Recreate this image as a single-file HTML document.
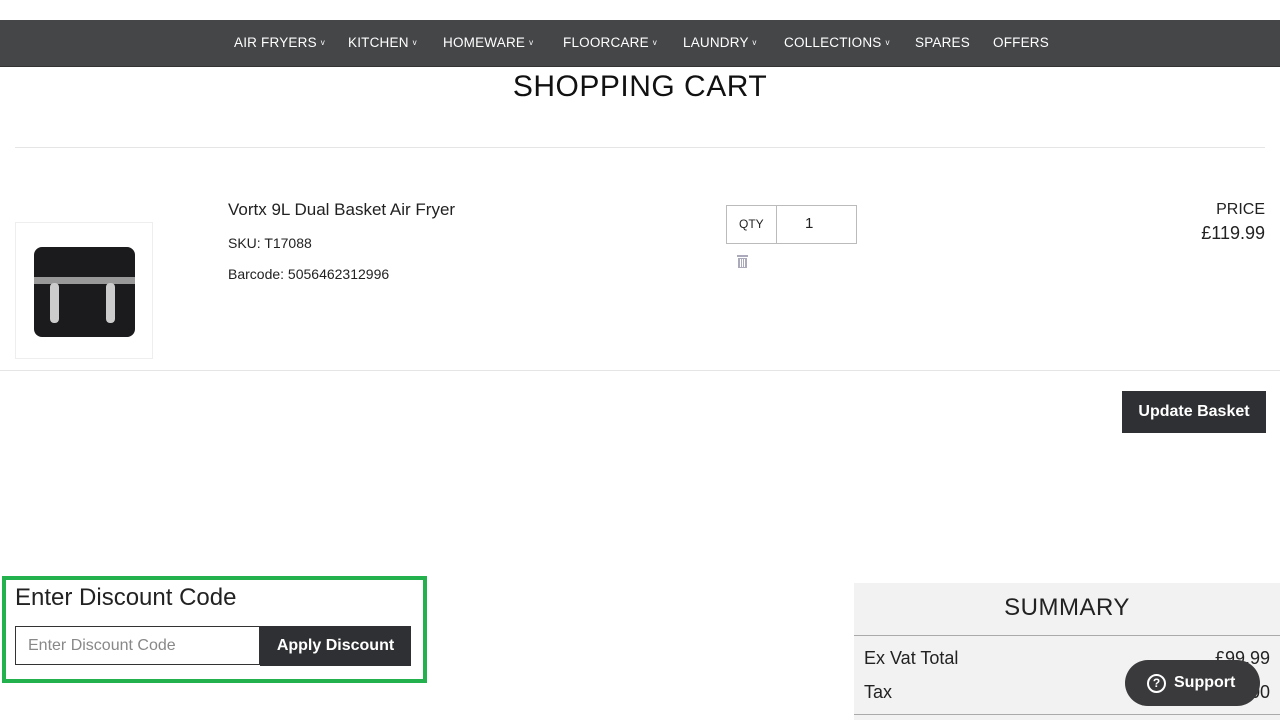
<!DOCTYPE html>
<html><head><style>
*{box-sizing:border-box;margin:0;padding:0}
body{width:1280px;height:720px;overflow:hidden;background:#fff;font-family:"Liberation Sans",sans-serif;color:#222;position:relative}
.abs{position:absolute}
nav{position:absolute;left:0;top:20px;width:1280px;height:47px;background:#454648;border-bottom:1px solid #333}
nav span{position:absolute;top:15px;color:#fff;font-size:13.5px;letter-spacing:0.2px}
nav i{font-style:normal;font-size:8px;vertical-align:2px}
</style></head><body>
<nav>
<span style="left:234px">AIR FRYERS <i>v</i></span>
<span style="left:348px">KITCHEN <i>v</i></span>
<span style="left:443px">HOMEWARE <i>v</i></span>
<span style="left:563px">FLOORCARE <i>v</i></span>
<span style="left:683px">LAUNDRY <i>v</i></span>
<span style="left:784px">COLLECTIONS <i>v</i></span>
<span style="left:915px">SPARES</span>
<span style="left:993px">OFFERS</span>
</nav>
<div class="abs" style="left:0;width:1280px;top:70px;text-align:center;font-size:30px;color:#111;letter-spacing:0.5px">SHOPPING CART</div>
<div class="abs" style="left:15px;top:147px;width:1250px;height:1px;background:#e5e5e5"></div>
<div class="abs" style="left:15px;top:222px;width:138px;height:137px;border:1px solid #eee">
<div class="abs" style="left:18px;top:24px;width:101px;height:90px;background:#1b1b1d;border-radius:8px"></div>
<div class="abs" style="left:18px;top:54px;width:101px;height:7px;background:#999"></div>
<div class="abs" style="left:34px;top:60px;width:9px;height:40px;background:#ccc;border-radius:4px"></div>
<div class="abs" style="left:90px;top:60px;width:9px;height:40px;background:#ccc;border-radius:4px"></div>
</div>
<div class="abs" style="left:228px;top:200px;font-size:17px">Vortx 9L Dual Basket Air Fryer</div>
<div class="abs" style="left:228px;top:235px;font-size:14px">SKU: T17088</div>
<div class="abs" style="left:228px;top:266px;font-size:14px">Barcode: 5056462312996</div>
<div class="abs" style="left:726px;top:205px;width:131px;height:39px;border:1px solid #bbb"></div>
<div class="abs" style="left:776px;top:205px;width:1px;height:39px;background:#bbb"></div>
<div class="abs" style="left:739px;top:217px;font-size:12px">QTY</div>
<div class="abs" style="left:805px;top:215px;font-size:15px">1</div>
<svg class="abs" style="left:736px;top:254px" width="13" height="14" viewBox="0 0 13 14"><rect x="1" y="1" width="11" height="2" fill="#aab"/><rect x="2" y="4" width="9" height="10" fill="#aab"/><rect x="4" y="5" width="1" height="8" fill="#fff"/><rect x="6" y="5" width="1" height="8" fill="#fff"/><rect x="8" y="5" width="1" height="8" fill="#fff"/></svg>
<div class="abs" style="right:15px;top:201px;font-size:16px;text-align:right">PRICE</div>
<div class="abs" style="right:15px;top:223px;font-size:18px">£119.99</div>
<div class="abs" style="left:0;top:370px;width:1280px;height:1px;background:#e5e5e5"></div>
<div class="abs" style="left:1122px;top:391px;width:144px;height:42px;background:#2f3033;color:#fff;font-weight:bold;font-size:16px;text-align:center;line-height:42px">Update Basket</div>
<div class="abs" style="left:2px;top:576px;width:425px;height:107px;border:4px solid #22b14c"></div>
<div class="abs" style="left:15px;top:584px;font-size:24px">Enter Discount Code</div>
<div class="abs" style="left:15px;top:626px;width:245px;height:39px;border:1px solid #333;padding-left:12px;line-height:37px;font-size:16px;color:#888">Enter Discount Code</div>
<div class="abs" style="left:260px;top:626px;width:151px;height:40px;background:#2f3033;color:#fff;font-weight:bold;font-size:16px;text-align:center;line-height:40px">Apply Discount</div>
<div class="abs" style="left:854px;top:583px;width:426px;height:137px;background:#f2f2f2"></div>
<div class="abs" style="left:854px;top:594px;width:426px;text-align:center;font-size:24px;letter-spacing:0.5px">SUMMARY</div>
<div class="abs" style="left:854px;top:635px;width:426px;height:1px;background:#aaa"></div>
<div class="abs" style="left:864px;top:648px;font-size:18px">Ex Vat Total</div>
<div class="abs" style="right:10px;top:648px;font-size:18px">£99.99</div>
<div class="abs" style="left:864px;top:682px;font-size:18px">Tax</div>
<div class="abs" style="right:10px;top:682px;font-size:18px">£20.00</div>
<div class="abs" style="left:854px;top:714px;width:426px;height:1px;background:#aaa"></div>
<div class="abs" style="left:1125px;top:660px;width:135px;height:46px;background:#3a3a3c;border-radius:23px;color:#fff;font-weight:bold;font-size:16px;line-height:46px;padding-left:49px">Support</div>
<div class="abs" style="left:1147px;top:674px;width:19px;height:19px;border:2px solid #fff;border-radius:50%;color:#fff;font-size:12px;font-weight:bold;text-align:center;line-height:15px">?</div>
</body></html>
